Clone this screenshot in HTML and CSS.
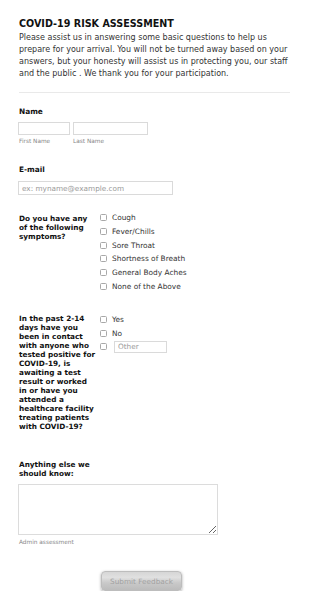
FILE: index.html
```html
<!DOCTYPE html>
<html lang="en">
<head>
<meta charset="utf-8">
<title>COVID-19 Risk Assessment</title>
<link rel="stylesheet" href="styles.css">
</head>
<body>
<form class="form">
  <header class="header">
    <h1 class="title">COVID-19 RISK ASSESSMENT</h1>
    <p class="intro">Please assist us in answering some basic questions to help us prepare for your arrival. You will not be turned away based on your answers, but your honesty will assist us in protecting you, our staff and the public . We thank you for your participation.</p>
  </header>
  <div class="divider"></div>

  <section class="field field-name">
    <label class="field-label">Name</label>
    <div class="name-inputs">
      <input class="text-input first" type="text">
      <input class="text-input last" type="text">
    </div>
    <div class="sublabels">
      <span class="sublabel first-sub">First Name</span>
      <span class="sublabel">Last Name</span>
    </div>
  </section>

  <section class="field field-email">
    <label class="field-label">E-mail</label>
    <input class="text-input email" type="text" placeholder="ex: myname@example.com">
  </section>

  <section class="field field-row field-symptoms">
    <label class="field-label side-label">Do you have any of the following symptoms?</label>
    <div class="options">
      <label class="option"><input type="checkbox" class="check"><span>Cough</span></label>
      <label class="option"><input type="checkbox" class="check"><span>Fever/Chills</span></label>
      <label class="option"><input type="checkbox" class="check"><span>Sore Throat</span></label>
      <label class="option"><input type="checkbox" class="check"><span>Shortness of Breath</span></label>
      <label class="option"><input type="checkbox" class="check"><span>General Body Aches</span></label>
      <label class="option"><input type="checkbox" class="check"><span>None of the Above</span></label>
    </div>
  </section>

  <section class="field field-row field-contact">
    <label class="field-label side-label">In the past 2-14 days have you been in contact with anyone who tested positive for COVID-19, is awaiting a test result or worked in or have you attended a healthcare facility treating patients with COVID-19?</label>
    <div class="options">
      <label class="option"><input type="checkbox" class="check"><span>Yes</span></label>
      <label class="option"><input type="checkbox" class="check"><span>No</span></label>
      <label class="option"><input type="checkbox" class="check"><input type="text" class="text-input other" placeholder="Other"></label>
    </div>
  </section>

  <section class="field field-notes">
    <label class="field-label notes-label">Anything else we should know:</label>
    <textarea class="notes"></textarea>
    <div class="sublabel admin">Admin assessment</div>
  </section>

  <div class="actions">
    <button type="button" class="submit">Submit Feedback</button>
  </div>
</form>
</body>
</html>
```
FILE: styles.css
```css
* { box-sizing: border-box; }

body {
  margin: 0;
  background: #fff;
  font-family: "DejaVu Sans", Verdana, sans-serif;
  color: #333;
}

.form {
  padding: 18px 20px 0 19px;
}

.title {
  margin: 0;
  font-size: 9.6px;
  line-height: 12px;
  font-weight: bold;
  color: #111;
}

.intro {
  margin: 2px 0 0;
  font-size: 8px;
  line-height: 12px;
  color: #333;
}

.divider {
  height: 1px;
  background: #e9e9e9;
  margin: 12px 0 14px;
}

.field-label {
  display: block;
  font-size: 7.4px;
  line-height: 10px;
  font-weight: bold;
  color: #111;
}

.text-input {
  display: block;
  margin: 0;
  border: 1px solid #dadada;
  border-radius: 0;
  background: #fff;
  font-family: "DejaVu Sans", Verdana, sans-serif;
  font-size: 7.3px;
  color: #555;
  padding: 0 3px;
  outline: none;
}

.text-input::placeholder { color: #9a9a9a; }

.name-inputs {
  display: flex;
  gap: 3px;
  margin-top: 5px;
}

.text-input.first { width: 52px; height: 13px; margin-left: -1px; }
.text-input.last { width: 75px; height: 13px; }

.sublabels {
  display: flex;
  margin-top: 2px;
}

.sublabel {
  font-size: 5.8px;
  line-height: 8px;
  color: #888;
}

.first-sub { width: 54px; }

.field-email { margin-top: 20px; }

.text-input.email {
  width: 155px;
  height: 14px;
  margin-top: 6px;
  margin-left: -1px;
}

.field-row {
  display: flex;
  align-items: flex-start;
}

.field-symptoms { margin-top: 16px; }
.field-contact { margin-top: 19.6px; }

.side-label {
  width: 77px;
  margin-right: 4px;
  margin-top: 3px;
  font-size: 7.3px;
  line-height: 8.93px;
  flex: none;
}

.field-symptoms .side-label { margin-top: 4.3px; }
.field-contact .side-label { margin-top: 2.6px; }

.options {
  display: flex;
  flex-direction: column;
}

.option {
  display: flex;
  align-items: center;
  height: 13.7px;
  font-size: 7.4px;
  color: #333;
}

.check {
  appearance: none;
  -webkit-appearance: none;
  width: 7px;
  height: 7px;
  margin: 0 5px 0 0;
  border: 1px solid #a8a8a8;
  border-radius: 1.5px;
  background: #fff;
  flex: none;
}

.text-input.other {
  width: 53px;
  height: 12.4px;
  margin-left: 2px;
}

.field-notes { margin-top: 28px; }

.notes-label {
  width: 77px;
  font-size: 7.3px;
  line-height: 9.3px;
}

.notes {
  display: block;
  width: 200px;
  height: 51px;
  margin: 5.6px 0 0 -1px;
  border: 1px solid #dcdcdc;
  border-radius: 0;
  padding: 2px;
  font-family: "DejaVu Sans", Verdana, sans-serif;
  font-size: 7.4px;
  outline: none;
  resize: both;
}

.admin { margin-top: 3px; }

.actions {
  display: flex;
  padding-left: 82px;
  margin-top: 25.4px;
}

.submit {
  width: 81px;
  height: 20px;
  padding: 0;
  border: 1px solid #bdbdbd;
  border-radius: 4px;
  background: linear-gradient(180deg, #d6d6d6 0%, #e0e0e0 30%, #c9c9c9 60%, #bcbcbc 100%);
  box-shadow: 0 1px 3px rgba(0, 0, 0, 0.35);
  font-family: "DejaVu Sans", Verdana, sans-serif;
  font-size: 7.3px;
  color: #a2a2a2;
  cursor: pointer;
}
```
